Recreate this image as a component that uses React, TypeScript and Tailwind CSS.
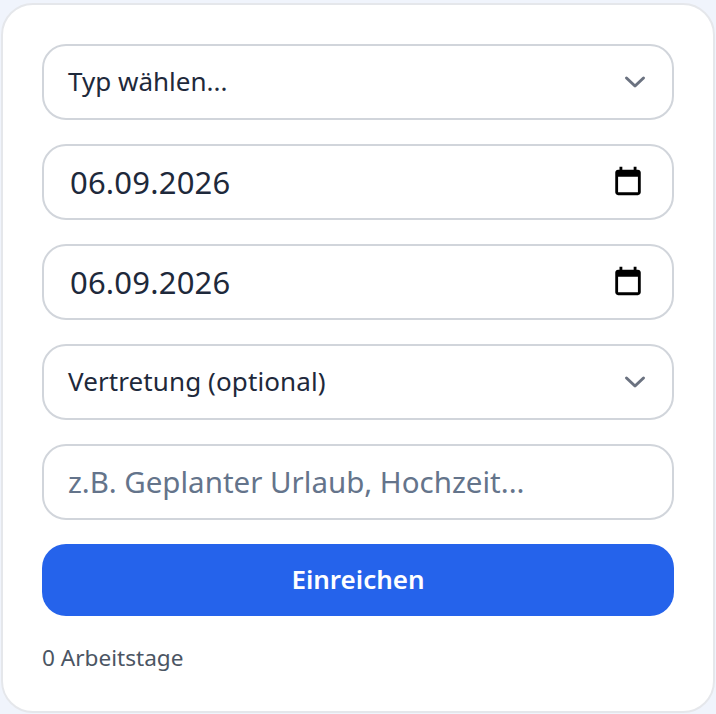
import React from "react";

function Chevron() {
  return (
    <svg width="24" height="24" viewBox="0 0 24 24" fill="none" className="shrink-0">
      <path d="M3.5 8l8.5 8 8.5-8" stroke="#6b7280" strokeWidth="3" strokeLinecap="round" strokeLinejoin="round" />
    </svg>
  );
}

function Calendar() {
  return (
    <svg width="34" height="34" viewBox="0 0 24 24" fill="#000" className="mt-[-2px] shrink-0">
      <path d="M19 4h-1V2h-2v2H8V2H6v2H5c-1.11 0-1.99.9-1.99 2L3 20c0 1.1.89 2 2 2h14c1.1 0 2-.9 2-2V6c0-1.1-.9-2-2-2zm0 16H5V9h14v11z" />
    </svg>
  );
}

function Field({ children, className = "" }: { children: React.ReactNode; className?: string }) {
  return (
    <div className={`flex h-[76px] items-center justify-between rounded-[24px] border-2 border-[#d1d5db] bg-white ${className}`}>
      {children}
    </div>
  );
}

export default function App() {
  return (
    <div className="h-[714px] w-[716px] bg-[#f0f4fc] px-px pb-px pt-[3px] font-['Noto_Sans','Open_Sans',sans-serif]">
      <div className="flex h-[710px] flex-col rounded-[32px] border-2 border-[#e5e7eb] bg-white px-[39px] pt-[39px]">
        <div className="flex flex-col gap-6">
          <Field className="pl-6 pr-[25px]">
            <span className="mt-[-2px] text-[26px] text-[#1e293b]">Typ wählen...</span>
            <Chevron />
          </Field>
          <Field className="pl-[26px] pr-[27px]">
            <span className="text-[31px] tracking-[0.2px] text-[#1e293b]">06.09.2026</span>
            <Calendar />
          </Field>
          <Field className="pl-[26px] pr-[27px]">
            <span className="text-[31px] tracking-[0.2px] text-[#1e293b]">06.09.2026</span>
            <Calendar />
          </Field>
          <Field className="pl-6 pr-[25px]">
            <span className="mt-[-2px] text-[26px] tracking-[0.1px] text-[#1e293b]">Vertretung (optional)</span>
            <Chevron />
          </Field>
          <Field className="pl-6 pr-6">
            <span className="text-[29.5px] text-[#64748b]">z.B. Geplanter Urlaub, Hochzeit...</span>
          </Field>
          <button className="flex h-[72px] items-center justify-center rounded-[24px] bg-[#2563eb] pb-[2px] text-[26px] font-semibold text-white">
            Einreichen
          </button>
        </div>
        <div className="mt-[24px] text-[22.6px] leading-[36px] text-[#4b5563]">0 Arbeitstage</div>
      </div>
    </div>
  );
}
